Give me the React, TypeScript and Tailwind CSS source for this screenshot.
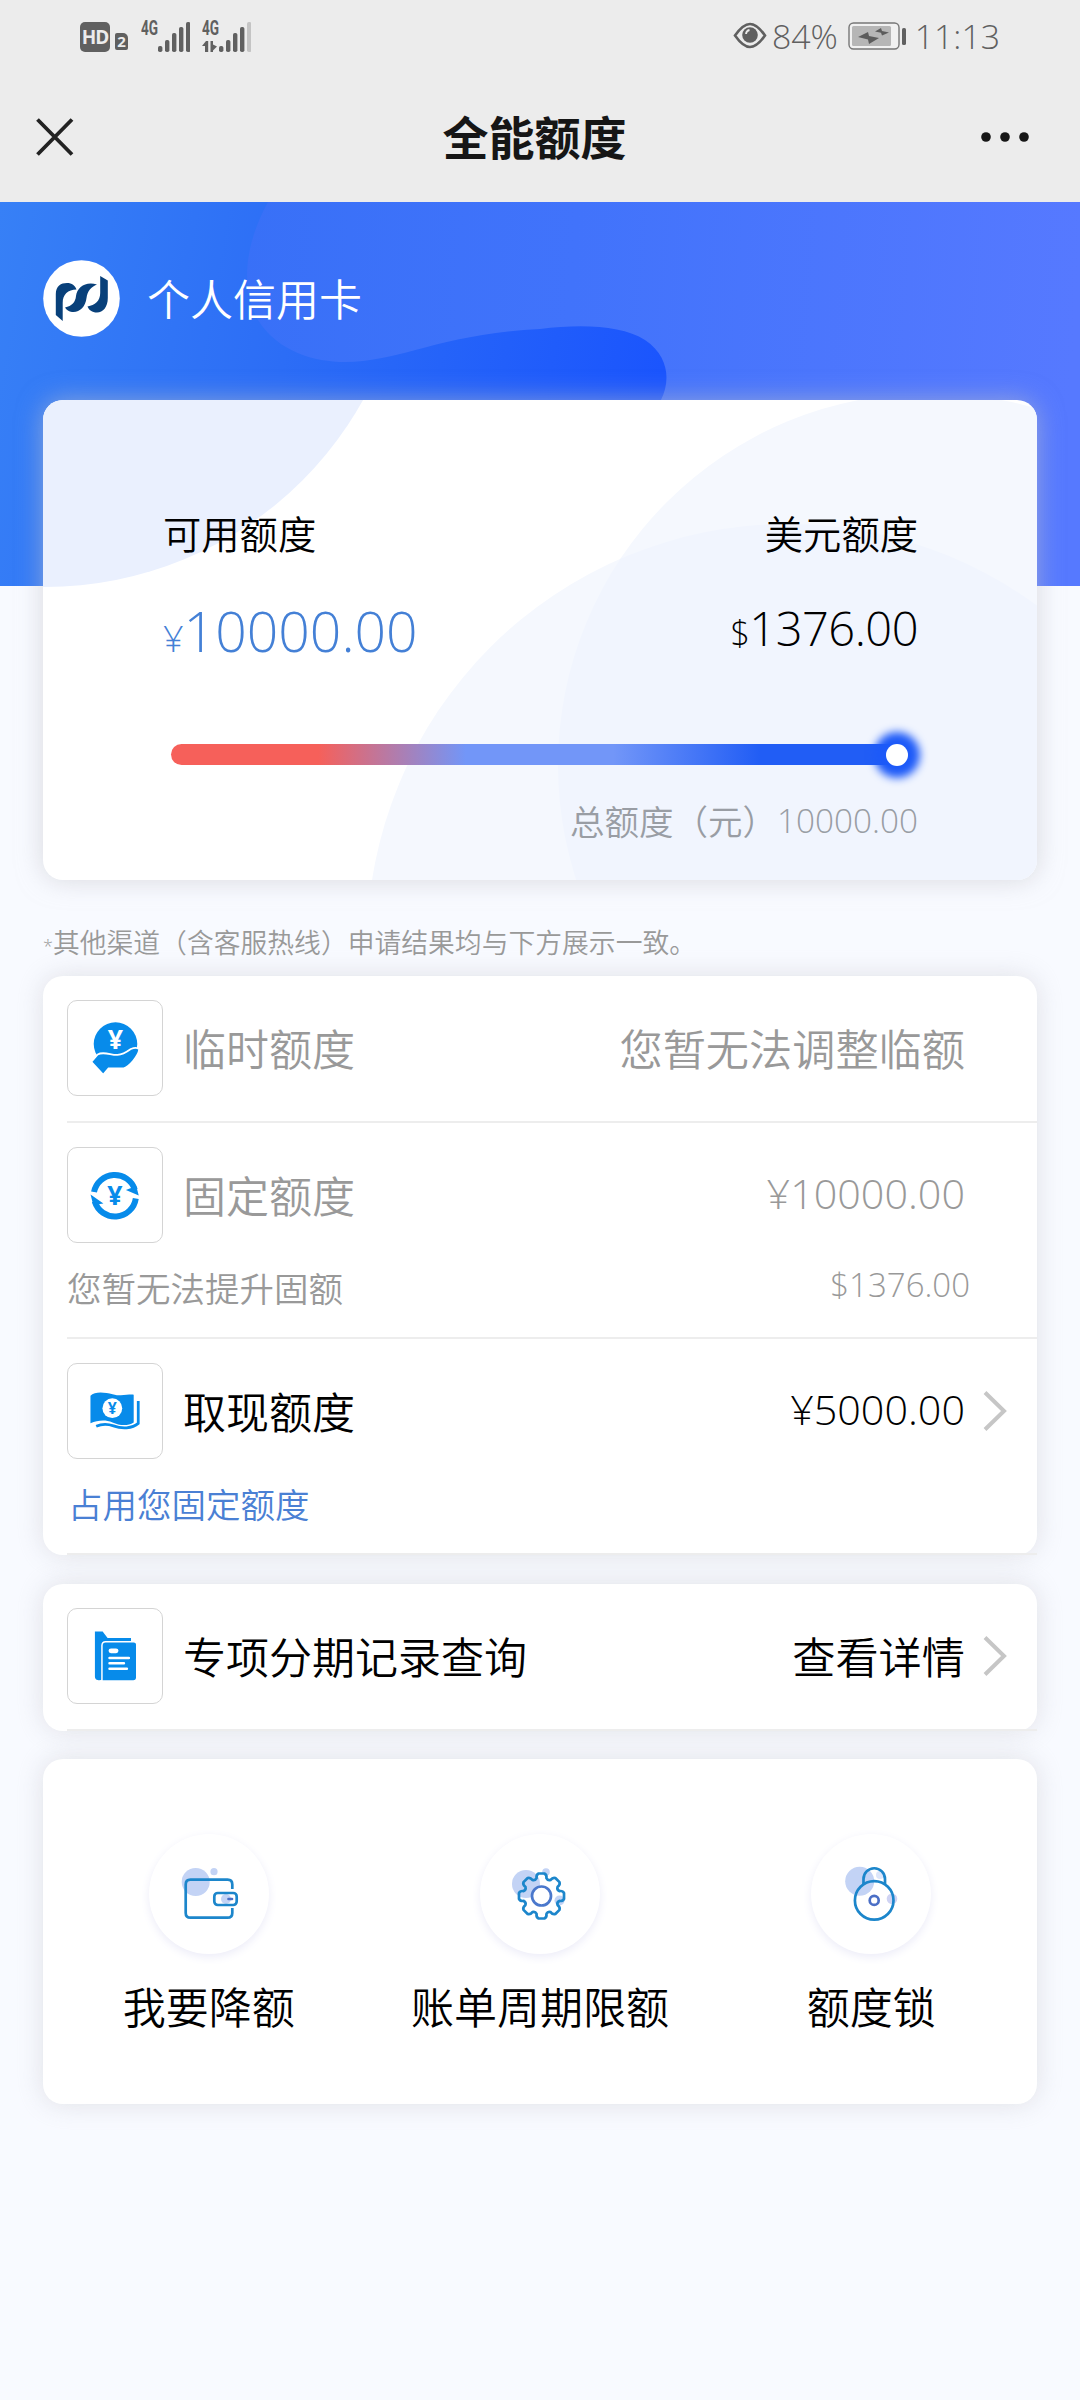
import type { ReactNode } from 'react'

const BLUE = '#078bea'

function SignalBars({ weakLast = false }: { weakLast?: boolean }) {
  const heights = [6, 12, 19, 25, 30]
  return (
    <svg width="32" height="30" viewBox="0 0 32 30">
      {heights.map((h, i) => (
        <rect key={h} x={i * 7} y={30 - h} width="4.400" height={h} rx="1.8" fill={weakLast && i === 4 ? '#c4c4c4' : '#606060'} />
      ))}
    </svg>
  )
}

function StatusBar() {
  return (
    <div className="flex h-[72px] items-center justify-between pr-[80px] pl-20 text-[#606060]">
      <div className="flex h-8 items-end">
        <span className="flex h-[30px] w-[30px] items-center justify-center rounded-[5px] bg-[#606060] font-['Open_Sans'] text-[19px] font-bold tracking-tighter text-[#ececec]">
          HD
        </span>
        <span className="mb-[2px] ml-[5px] flex h-[17px] w-[13px] items-center justify-center rounded-[2px] rounded-tr-[5px] bg-[#606060] font-['Open_Sans'] text-[15px] font-bold text-[#ececec]">
          2
        </span>
        <span className="mb-[15px] ml-[13px] w-[17px] font-['Roboto'] text-[20px] leading-[17px] font-bold">
          <span className="inline-block origin-left scale-x-[0.68]">4G</span>
        </span>
        <SignalBars />
        <span className="ml-[12px] flex h-[32px] w-[17px] flex-col justify-between">
          <span className="inline-block w-[17px] origin-left scale-x-[0.68] font-['Roboto'] text-[20px] leading-[17px] font-bold">4G</span>
          <svg width="15" height="11" viewBox="0 0 15 11" fill="#606060">
            <path d="M0 5 L4 0 H6.2 V11 H3 V5 Z M8.5 0 H11 V3.5 L15 5.5 L11 9.5 V11 H8.5 Z" />
          </svg>
        </span>
        <SignalBars weakLast />
      </div>
      <div className="flex items-center font-['Open_Sans'] text-[33.8px] leading-none font-light">
        <svg width="34" height="27" viewBox="0 0 34 27">
          <path d="M2 13.5 C8 5 13 2 17 2 S26 5 32 13.5 C26 22 21 25 17 25 S8 22 2 13.5 Z" fill="none" stroke="#606060" strokeWidth="2.6" />
          <circle cx="17" cy="13" r="7.8" fill="#606060" />
          <path d="M13 12 A4.5 4.5 0 0 1 16.5 8" fill="none" stroke="#ececec" strokeWidth="1.8" />
        </svg>
        <span className="mt-[1px] ml-[5px]">84%</span>
        <svg className="ml-[10px]" width="58" height="28" viewBox="0 0 58 28">
          <rect x="1" y="1" width="50" height="26" rx="4.5" fill="#f1f1f1" stroke="#777" strokeWidth="1.4" />
          <rect x="4" y="4" width="39" height="20" rx="1.5" fill="#b6b6b6" />
          <path d="M10 15 L20 10 L21 14 L31 16 L21 22 L20 17.500 Z M27 9.500 L33 6 L34 9 L41 10.500 L34 13.500 L33 10.800 Z" fill="#5c5c5c" />
          <rect x="54" y="6" width="4" height="17" rx="1.6" fill="#606060" />
        </svg>
        <span className="mt-[1px] ml-[9px]">11:13</span>
      </div>
    </div>
  )
}

function TitleBar() {
  return (
    <div className="flex h-[130px] items-center justify-between pr-[50px] pl-9">
      <svg width="38" height="38" viewBox="0 0 38 38">
        <path d="M1.500 1.500 L36 36.500 M36 1.500 L1.500 36.500" stroke="#222" strokeWidth="3.800" />
      </svg>
      <h1 className="mb-[4px] ml-[15px] text-[46px] leading-none font-bold text-[#161616]">全能额度</h1>
      <svg width="50" height="12" viewBox="0 0 50 12" fill="#161616">
        <circle cx="6" cy="6" r="4.800" />
        <circle cx="25" cy="6" r="4.800" />
        <circle cx="44" cy="6" r="4.800" />
      </svg>
    </div>
  )
}

function BannerWave() {
  return (
    <svg className="absolute inset-0" width="1080" height="384" viewBox="0 0 1080 384">
      <defs>
        <linearGradient id="base" gradientUnits="userSpaceOnUse" x1="0" y1="0" x2="670" y2="120">
          <stop offset="0" stopColor="#3780f6" />
          <stop offset="0.45" stopColor="#2c6df6" />
          <stop offset="1" stopColor="#1b55fd" />
        </linearGradient>
        <linearGradient id="wave" gradientUnits="userSpaceOnUse" x1="240" y1="0" x2="1080" y2="60">
          <stop offset="0" stopColor="#3870f7" />
          <stop offset="0.4" stopColor="#4173fb" />
          <stop offset="1" stopColor="#5679ff" />
        </linearGradient>
      </defs>
      <rect width="1080" height="384" fill="url(#base)" />
      <path
        d="M268 0 C245 42 240 85 258 118 C278 150 315 160 345 160 C400 160 440 132 540 127 C580 122 622 123 645 138 C670 155 670 180 661 198 V384 H1080 V0 Z"
        fill="url(#wave)"
      />
    </svg>
  )
}

function BankLogo() {
  return (
    <svg width="77" height="77" viewBox="0 0 77 77">
      <circle cx="38.500" cy="38.500" r="38.300" fill="#fff" />
      <g fill="#08407a">
        <path d="M12.800 55 V34 C12.800 26 18 23 24 23 C29 23 32 25.500 33.500 29.500 C25 30 19.700 34 19.700 43 V61 Z" />
        <path d="M22 47.500 C29 46 32.500 42 33 36 C34 27 43 21 54 24.500 C48 27 44.500 31 43.500 38 C42.500 47 36 53 29 52 C26 51.500 23.500 50 22 47.500 Z" />
        <path d="M57.200 16 L64.800 20.500 V38 C64.800 47 60 52.500 54 52.500 C49 52.500 46 50 44.500 46.500 C52 45 57.200 41 57.200 33 Z" />
      </g>
    </svg>
  )
}

function LimitCard() {
  return (
    <section className="relative h-[480px] rounded-[20px] bg-white shadow-[0_0_26px_rgba(195,195,200,0.6)]">
      <svg className="absolute inset-0 rounded-[20px]" width="994" height="480" viewBox="0 0 994 480">
        <clipPath id="right-disc">
          <circle cx="887" cy="365" r="372" />
        </clipPath>
        <circle cx="2" cy="-177" r="364" fill="#eaf0fe" />
        <circle cx="887" cy="365" r="372" fill="#f5f8fe" />
        <circle cx="745" cy="545" r="421" fill="#f5f8fe" />
        <circle cx="745" cy="545" r="421" fill="#f1f5fe" clipPath="url(#right-disc)" />
      </svg>
      <div className="relative pt-[111px] pr-[119px] pl-[120px]">
        <div className="flex justify-between text-[38.3px] leading-[44px] text-black">
          <span>可用额度</span>
          <span>美元额度</span>
        </div>
        <div className="mt-[44px] flex h-[64px] items-baseline justify-between font-['Open_Sans'] leading-[64px] font-light">
          <span className="text-[55.3px] text-[#4480d6]">
            <span className="text-[36px]">¥</span>10000.00
          </span>
          <span className="relative -top-[6px] text-[47px] tracking-[-0.5px] text-black">
            <span className="text-[34px]">$</span>1376.00
          </span>
        </div>
        <div className="mt-[81px] ml-[8px] flex h-[21px] w-[737px] items-center justify-end rounded-full bg-[linear-gradient(90deg,#f6605a_20%,#7296f8_40%,#7296f8_60%,#215df5_80%)]">
          <span className="h-[22px] w-[22px] rounded-full bg-white shadow-[0_0_9px_12px_#1d5af8]" />
        </div>
        <div className="mt-[32px] flex items-center justify-end text-[34.5px] leading-[46px] text-[#999da4]">
          <span>总额度（元）</span>
          <span className="font-['Open_Sans'] text-[33.3px] font-light">10000.00</span>
        </div>
      </div>
    </section>
  )
}

function TempIcon() {
  return (
    <>
      <circle cx="48" cy="43.500" r="22" fill={BLUE} />
      <text x="48" y="49" textAnchor="middle" fontSize="27" fontWeight="700" fontFamily="Open Sans" fill="#fff">¥</text>
      <path
        d="M23.500 61.500 L30 54 C36 50.500 44 55 50 54.500 C56 54 60 51 63.500 48.500 C67 47 70.500 47 72 49 C71 56 62 66 56.500 68 H41 L35.500 74.500 Z"
        fill={BLUE}
        stroke="#fff"
        strokeWidth="1.800"
      />
    </>
  )
}

function FixedIcon() {
  return (
    <>
      <g fill="none" stroke={BLUE} strokeWidth="6">
        <path d="M26.300 44.500 A21.300 21.300 0 0 1 67.500 42" />
        <path d="M68.500 51 A21.300 21.300 0 0 1 27 54" />
      </g>
      <path d="M71.500 48 L58.500 42.500 L69 38.500 Z M22.800 47 L35.800 56 L25.500 57.500 Z" fill={BLUE} />
      <text x="47.300" y="57.800" textAnchor="middle" fontSize="27" fontWeight="700" fontFamily="Open Sans" fill={BLUE}>¥</text>
    </>
  )
}

function CashIcon() {
  return (
    <>
      <path d="M22.700 32 C27 27.500 37 28.500 45 30.500 C54 33 60 30.500 66.400 31 V59 C60 63 52 62 45 59 C37 56 30 57 22.700 60 Z" fill={BLUE} />
      <path d="M71 37.500 V60 C65 65.500 54 65.500 46 62.500 C40 60.500 34 60.500 28.500 63" fill="none" stroke={BLUE} strokeWidth="2.800" />
      <circle cx="44.800" cy="44.700" r="10" fill="#fff" />
      <text x="44.800" y="50.500" textAnchor="middle" fontSize="16" fontWeight="700" fontFamily="Open Sans" fill={BLUE}>¥</text>
    </>
  )
}

function RecordIcon() {
  return (
    <>
      <path d="M27.200 22.800 H35 L40 29.200 H63.700 V72 H31 C28 72 27.200 70 27.200 68 Z" fill={BLUE} />
      <path d="M34.300 72 V37 C34.300 34.500 35.500 33 38 33 H66.500 C68.500 33 69.500 34.500 69.500 36 V69 C69.500 71.500 68.500 72.800 66 72.800 H33 Z" fill={BLUE} stroke="#fff" strokeWidth="1.500" />
      <g stroke="#fff" strokeLinecap="round">
        <path d="M43.500 42.300 H48.500" strokeWidth="5" />
        <path d="M42 49.500 H61.500 M42 54.900 H56.500 M42 60.300 H59.500" strokeWidth="2.600" />
      </g>
    </>
  )
}

function Chevron() {
  return (
    <svg width="24" height="40" viewBox="0 0 24 40">
      <path d="M2 1.500 L21 20 L2 38.500" fill="none" stroke="#c6c6c6" strokeWidth="4" />
    </svg>
  )
}

type RowProps = {
  icon: ReactNode
  title: string
  value: string
  numeric?: boolean
  arrow?: boolean
  muted?: boolean
  children?: ReactNode
}

function LimitRow({ icon, title, value, numeric, arrow, muted, children }: RowProps) {
  return (
    <div className="ml-6 border-b-2 border-[#ededed] pt-6">
      <div className={muted ? 'flex items-center text-[#999]' : 'flex items-center text-black'}>
        <svg className="rounded-[10px] border border-[#d4d4d4]" width="96" height="96" viewBox="0 0 95 95">
          {icon}
        </svg>
        <span className="mb-[3px] ml-5 flex-1 text-[43px] leading-[60px]">{title}</span>
        {numeric ? (
          <span className="mb-[4px] font-['Open_Sans'] text-[41.3px] leading-[60px] font-light">{value}</span>
        ) : (
          <span className="mb-[3px] text-[43.2px] leading-[60px]">{value}</span>
        )}
        <span className="flex w-[72px] pl-[18px]">{arrow && <Chevron />}</span>
      </div>
      {children ? <div className="flex h-[94px] items-center justify-between pb-[5px]">{children}</div> : <div className="h-[25px]" />}
    </div>
  )
}

function WalletArt() {
  return (
    <>
      <circle cx="46.700" cy="48" r="14" fill="#c3d3f5" />
      <circle cx="65" cy="37.700" r="3.600" fill="#c3d3f5" />
      <circle cx="77" cy="65" r="5" fill="#c3d3f5" />
      <g fill="none" stroke="#1c86cb" strokeWidth="2.700">
        <path d="M83.300 55 V50.500 Q83.300 45.700 78.500 45.700 H41.500 Q36.700 45.700 36.700 50.500 V79 Q36.700 83.700 41.500 83.700 H78.500 Q83.300 83.700 83.300 79 V74" />
        <rect x="65.300" y="59" width="22.400" height="12" rx="3.500" />
      </g>
      <path d="M79.500 65 H83" stroke="#4b6fc6" strokeWidth="2.600" strokeLinecap="round" />
    </>
  )
}

// Eight-tooth gear outline traced around (61.5, 62)
function gearPath() {
  const pts: string[] = []
  for (let i = 0; i < 8; i++) {
    const mid = (i * Math.PI) / 4 - Math.PI / 2
    const at = (r: number, a: number) => `${(61.5 + r * Math.cos(mid + a)).toFixed(2)} ${(62 + r * Math.sin(mid + a)).toFixed(2)}`
    pts.push(`${i ? 'L' : 'M'}${at(18.5, -0.27)}`, `Q${at(22, -0.25)} ${at(22.7, -0.13)}`, `L${at(22.7, 0.13)}`, `Q${at(22, 0.25)} ${at(18.5, 0.27)}`, `Q${at(16.4, 0.39)} ${at(18.5, 0.515)}`)
  }
  return pts.join(' ') + ' Z'
}

function GearArt() {
  return (
    <>
      <circle cx="46" cy="50" r="14" fill="#c3d3f5" />
      <circle cx="66" cy="38" r="3.800" fill="#c3d3f5" />
      <circle cx="79.500" cy="66.500" r="5" fill="#c3d3f5" />
      <path d={gearPath()} fill="none" stroke="#1c86cb" strokeWidth="2.700" strokeLinejoin="round" />
      <circle cx="61.500" cy="62" r="9.500" fill="#fff" stroke="#4b78cc" strokeWidth="2.700" />
    </>
  )
}

function LockArt() {
  return (
    <>
      <circle cx="48.700" cy="47.300" r="14.500" fill="#c3d3f5" />
      <circle cx="81" cy="64.700" r="5.300" fill="#cfd3f3" />
      <circle cx="69" cy="41" r="4" fill="#dce6fa" />
      <g fill="none" stroke="#1c86cb" strokeWidth="2.700">
        <path d="M52.500 50 V45 A10.700 10.700 0 0 1 74 45 V50" />
        <circle cx="63.200" cy="66.400" r="19.300" />
      </g>
      <circle cx="63.200" cy="66.400" r="4.500" fill="#fff" stroke="#4b6fc6" strokeWidth="2.700" />
    </>
  )
}

const actions = [
  { label: '我要降额', art: <WalletArt /> },
  { label: '账单周期限额', art: <GearArt /> },
  { label: '额度锁', art: <LockArt /> },
]

export default function App() {
  return (
    <div className="min-h-[2400px] w-[1080px] bg-[#f8faff] font-['Noto_Sans_CJK_SC',sans-serif] font-[350]">
      <header className="h-[202px] bg-[#ececec]">
        <StatusBar />
        <TitleBar />
      </header>

      <div className="relative h-[384px]">
        <BannerWave />
        <div className="relative flex items-center pt-[58px] pl-[43px]">
          <BankLogo />
          <span className="mb-[2px] ml-[27px] text-[43px] leading-none text-white">个人信用卡</span>
        </div>
      </div>

      <main className="-mt-[186px] px-[43px]">
        <LimitCard />
        <p className="mt-[42px] h-[54px] text-[26.8px] leading-[40px] text-[#999]">
          <span className="font-['Open_Sans'] text-[18px]">*</span>其他渠道（含客服热线）申请结果均与下方展示一致。
        </p>

        <section className="rounded-[20px] bg-white shadow-[0_0_26px_rgba(195,195,200,0.45)]">
          <LimitRow icon={<TempIcon />} title="临时额度" value="您暂无法调整临额" muted />
          <LimitRow icon={<FixedIcon />} title="固定额度" value="¥10000.00" numeric muted>
            <span className="text-[34.5px] text-[#999]">您暂无法提升固额</span>
            <span className="mr-[67px] mb-[5px] font-['Open_Sans'] text-[33px] font-light text-[#999]">$1376.00</span>
          </LimitRow>
          <LimitRow icon={<CashIcon />} title="取现额度" value="¥5000.00" numeric arrow>
            <span className="ml-[1px] text-[34.5px] text-[#4a80d4]">占用您固定额度</span>
          </LimitRow>
        </section>

        <section className="mt-[29px] rounded-[20px] bg-white shadow-[0_0_26px_rgba(195,195,200,0.45)]">
          <LimitRow icon={<RecordIcon />} title="专项分期记录查询" value="查看详情" arrow />
        </section>

        <section className="mt-[28px] grid h-[345px] grid-cols-3 rounded-[20px] bg-white pt-[75px] shadow-[0_0_26px_rgba(195,195,200,0.45)]">
          {actions.map(({ label, art }) => (
            <div key={label} className="flex flex-col items-center">
              <svg className="rounded-full bg-white shadow-[0_3px_10px_#ececf8]" width="120" height="120" viewBox="0 0 120 120">
                {art}
              </svg>
              <span className="mt-[21px] text-[43px] leading-[60px] text-black">{label}</span>
            </div>
          ))}
        </section>
      </main>
    </div>
  )
}
